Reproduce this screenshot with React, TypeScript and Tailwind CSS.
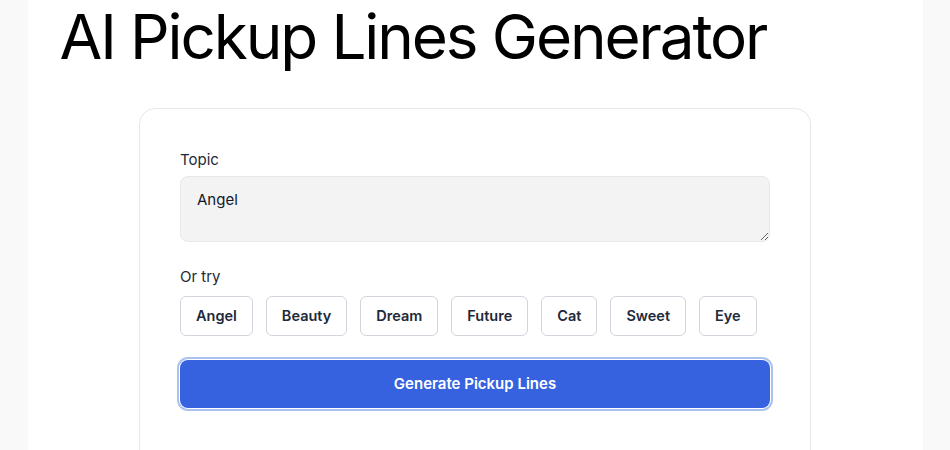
import React, { useState } from 'react';

const suggestions = ['Angel', 'Beauty', 'Dream', 'Future', 'Cat', 'Sweet', 'Eye'];

export default function App() {
    const [topic, setTopic] = useState('Angel');

    return (
        <div className="min-h-screen bg-[#f9f9f9]" style={{ fontFamily: 'Inter, "Noto Sans", sans-serif' }}>
            <div className="mx-auto min-h-screen w-[895px] bg-white px-8">
                <h1 className="text-[62px] font-normal leading-[74px] tracking-[-0.034em] text-black">
                    AI Pickup Lines Generator
                </h1>
                <div className="mx-auto mt-[34px] w-[672px] rounded-2xl border border-gray-200 p-10">
                    <label className="block text-[15px] text-gray-800">Topic</label>
                    <textarea
                        value={topic}
                        onChange={(e) => setTopic(e.target.value)}
                        className="mt-1 block h-[66px] w-full rounded-lg border border-gray-200 bg-[#f3f3f3] px-4 py-3 text-[15px] text-gray-900 outline-none"
                    />
                    <div className="mt-6 text-[15px] text-gray-800">Or try</div>
                    <div className="mt-2 flex gap-[13px]">
                        {suggestions.map((s) => (
                            <button
                                key={s}
                                onClick={() => setTopic(s)}
                                className="h-10 rounded-md border border-gray-300 bg-white px-[15px] text-[14.5px] font-semibold text-gray-800"
                            >
                                {s}
                            </button>
                        ))}
                    </div>
                    <button className="mt-6 h-12 w-full rounded-lg bg-[#3662e0] text-[15px] font-semibold text-white ring-2 ring-[#a9c3ee] ring-offset-1">
                        Generate Pickup Lines
                    </button>
                    <div className="h-20" />
                </div>
            </div>
        </div>
    );
}
